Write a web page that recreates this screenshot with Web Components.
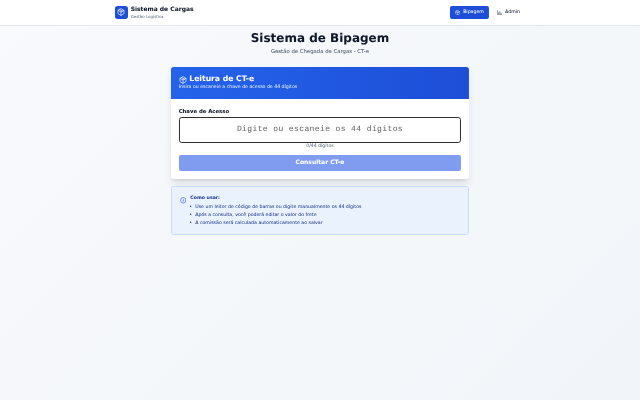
<!DOCTYPE html>
<html lang="pt-BR">
<head>
<meta charset="utf-8">
<title>Sistema de Bipagem</title>
<style>
  html, body { margin: 0; }
  body {
    width: 640px; height: 400px; overflow: hidden;
    background: linear-gradient(135deg, #f8fafc 0%, #f1f5f9 100%);
    font-family: "DejaVu Sans", sans-serif;
    text-rendering: geometricPrecision;
    -webkit-text-stroke: 0.1px;
  }
</style>
</head>
<body>
<app-page>
  <app-header></app-header>
  <page-title></page-title>
  <scan-card></scan-card>
  <help-box></help-box>
</app-page>

<script>
const BOX_ICON = `<path d="M21 8a2 2 0 0 0-1-1.73l-7-4a2 2 0 0 0-2 0l-7 4A2 2 0 0 0 3 8v8a2 2 0 0 0 1 1.73l7 4a2 2 0 0 0 2 0l7-4A2 2 0 0 0 21 16Z"/><path d="m3.3 7 8.7 5 8.7-5"/><path d="M12 22V12"/><path d="m7.5 4.27 9 5.15"/>`
const ICON_ATTRS = 'viewBox="0 0 24 24" fill="none" stroke="currentColor" stroke-width="2" stroke-linecap="round" stroke-linejoin="round"'

// the sections below are written at 1920x1200 sizes, each host zooms to a third
class AppPage extends HTMLElement {
  constructor() {
    super()
    this.attachShadow({ mode: 'open' })
    this.shadowRoot.innerHTML = `
<style>
  :host { display: block; width: 640px; height: 400px; transform: scale(0.9999); transform-origin: 0 0; filter: blur(0.2px); }
</style>
<slot></slot>`
  }
}

class AppHeader extends HTMLElement {
  constructor() {
    super()
    this.attachShadow({ mode: 'open' })
    this.shadowRoot.innerHTML = `
<style>
  :host { zoom: 0.33333; display: block; background: #fff; border-bottom: 1px solid #e2e8f0; box-shadow: 0 1px 2px rgba(15, 23, 42, 0.05); }
  .bar { width: 1232px; height: 75px; margin: 0 auto; display: flex; align-items: center; justify-content: space-between; }
  .brand { display: flex; align-items: center; gap: 8px; }
  .logo { width: 40px; height: 40px; border-radius: 8px; background: #1d4ed8; color: #fff; display: flex; align-items: center; justify-content: center; }
  .logo svg { width: 24px; height: 24px; }
  h1 { margin: 0; font-size: 18px; line-height: 28px; font-weight: 700; color: #0f172a; }
  small { display: block; font-size: 12px; line-height: 16px; color: #64748b; }
  nav { display: flex; align-items: center; gap: 8px; }
  a { display: flex; align-items: center; gap: 8px; height: 40px; padding: 0 16px; border-radius: 6px; font-size: 14px; color: #0f172a; }
  a.on { background: #1d4ed8; color: #fff; }
  a svg { width: 16px; height: 16px; }
</style>
<div class="bar">
  <div class="brand">
    <div class="logo"><svg ${ICON_ATTRS}>${BOX_ICON}</svg></div>
    <div><h1>Sistema de Cargas</h1><small>Gestão Logística</small></div>
  </div>
  <nav>
    <a class="on"><svg ${ICON_ATTRS}>${BOX_ICON}</svg>Bipagem</a>
    <a><svg ${ICON_ATTRS}><path d="M3 3v18h18"/><path d="M8 17v-5"/><path d="M13 17V7"/><path d="M18 17v-3"/></svg>Admin</a>
  </nav>
</div>`
  }
}

class PageTitle extends HTMLElement {
  constructor() {
    super()
    this.attachShadow({ mode: 'open' })
    this.shadowRoot.innerHTML = `
<style>
  :host { zoom: 0.33333; display: block; text-align: center; padding-top: 18px; }
  h2 { margin: 0; font-size: 36px; line-height: 40px; font-weight: 700; color: #0f172a; }
  p { margin: 8px 0 0; font-size: 16px; line-height: 24px; color: #475569; }
</style>
<h2>Sistema de Bipagem</h2>
<p>Gestão de Chegada de Cargas - CT-e</p>`
  }
}

class ScanCard extends HTMLElement {
  constructor() {
    super()
    this.attachShadow({ mode: 'open' })
    this.shadowRoot.innerHTML = `
<style>
  :host { zoom: 0.33333; display: block; width: 896px; margin: 33px auto 0; background: #fff; border-radius: 8px; box-shadow: 0 20px 25px -5px rgba(15, 23, 42, 0.1), 0 8px 10px -6px rgba(15, 23, 42, 0.1); }
  header { padding: 22px 24px 23px; border-radius: 8px 8px 0 0; background: linear-gradient(90deg, #2563eb, #1d4ed8); color: #fff; }
  .head { display: flex; align-items: center; gap: 8px; font-size: 23px; line-height: 32px; font-weight: 700; }
  .head svg { width: 24px; height: 24px; }
  .sub { font-size: 14px; line-height: 20px; color: #dbeafe; }
  .body { padding: 27px 24px 24px; }
  label { display: block; font-size: 16px; line-height: 24px; font-weight: 700; color: #0f172a; }
  .field { height: 78px; box-sizing: border-box; margin-top: 2px; border: 4px solid #2b2b2b; border-radius: 8px; display: flex; align-items: center; justify-content: center; font-family: "Liberation Mono", monospace; font-size: 24px; letter-spacing: 1.2px; color: #666; }
  .count { margin-top: 3px; text-align: center; font-size: 14px; line-height: 20px; color: #64748b; }
  .go { height: 48px; margin-top: 12px; border-radius: 6px; background: #7f9cf0; color: #fff; display: flex; align-items: center; justify-content: center; font-size: 18px; font-weight: 700; }
</style>
<header>
  <div class="head"><svg ${ICON_ATTRS}>${BOX_ICON}</svg>Leitura de CT-e</div>
  <div class="sub">Insira ou escaneie a chave de acesso de 44 dígitos</div>
</header>
<div class="body">
  <label>Chave de Acesso</label>
  <div class="field">Digite ou escaneie os 44 dígitos</div>
  <div class="count">0/44 dígitos</div>
  <div class="go">Consultar CT-e</div>
</div>`
  }
}

class HelpBox extends HTMLElement {
  constructor() {
    super()
    this.attachShadow({ mode: 'open' })
    this.shadowRoot.innerHTML = `
<style>
  :host { zoom: 0.33333; display: flex; gap: 12px; width: 896px; box-sizing: border-box; margin: 24px auto 0; padding: 27px 24px 17px; background: #eaf2fe; border: 2px solid #c7dafc; border-radius: 8px; color: #1e3a8a; }
  svg { width: 20px; height: 20px; flex: none; margin-top: 2px; color: #1d4ed8; }
  b { display: block; font-size: 14px; line-height: 20px; }
  ul { margin: 7px 0 0 -3px; padding: 0; list-style: none; font-size: 14px; line-height: 20px; }
  li { display: flex; }
  li::before { content: "•"; flex: none; width: 18px; }
  li + li { margin-top: 4px; }
</style>
<svg ${ICON_ATTRS}><circle cx="12" cy="12" r="10"/><path d="M12 16v-4"/><path d="M12 8h.01"/></svg>
<div>
  <b>Como usar:</b>
  <ul>
    <li>Use um leitor de código de barras ou digite manualmente os 44 dígitos</li>
    <li>Após a consulta, você poderá editar o valor do frete</li>
    <li>A comissão será calculada automaticamente ao salvar</li>
  </ul>
</div>`
  }
}

customElements.define('app-page', AppPage)
customElements.define('app-header', AppHeader)
customElements.define('page-title', PageTitle)
customElements.define('scan-card', ScanCard)
customElements.define('help-box', HelpBox)
</script>
</body>
</html>
